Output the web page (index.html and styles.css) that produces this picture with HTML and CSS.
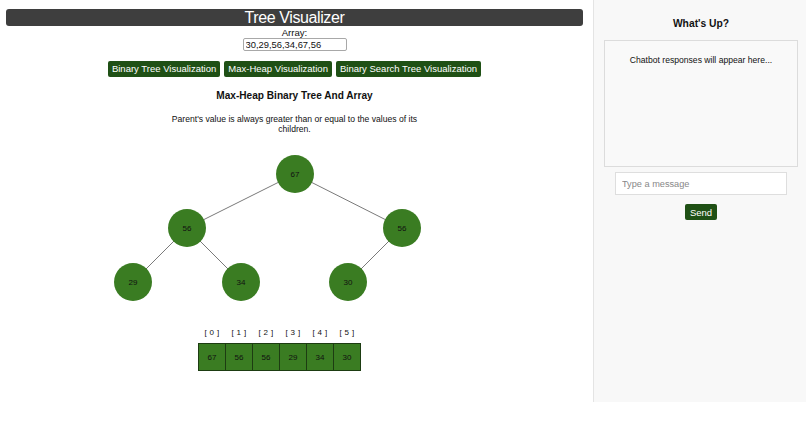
FILE: index.html
```html
<!DOCTYPE html>
<html lang="en">
<head>
  <meta charset="UTF-8" />
  <meta name="viewport" content="width=device-width, initial-scale=1.0"/>
  <title>Tree Visualizer</title>
  <link rel="stylesheet" href="styles.css">
</head>
<body>
  <div class="main">
    <h1 class="title">Tree Visualizer</h1>
    <label class="array-label" for="arrayInput">Array:</label>
    <input type="text" id="arrayInput" class="array-input" value="30,29,56,34,67,56" />

    <div class="buttons">
      <button class="btn">Binary Tree Visualization</button>
      <button class="btn">Max-Heap Visualization</button>
      <button class="btn">Binary Search Tree Visualization</button>
    </div>

    <h2 class="heading">Max-Heap Binary Tree And Array</h2>
    <p class="desc">Parent's value is always greater than or equal to the values of its children.</p>

    <svg class="tree" width="593" height="160" viewBox="0 0 593 160">
      <g class="edges">
        <line x1="295" y1="24" x2="187" y2="78" />
        <line x1="295" y1="24" x2="402" y2="78" />
        <line x1="187" y1="78" x2="133" y2="132" />
        <line x1="187" y1="78" x2="241" y2="132" />
        <line x1="402" y1="78" x2="348" y2="132" />
      </g>
      <g class="nodes">
        <circle cx="295" cy="24" r="19" /><text x="295" y="27">67</text>
        <circle cx="187" cy="78" r="19" /><text x="187" y="81">56</text>
        <circle cx="402" cy="78" r="19" /><text x="402" y="81">56</text>
        <circle cx="133" cy="132" r="19" /><text x="133" y="135">29</text>
        <circle cx="241" cy="132" r="19" /><text x="241" y="135">34</text>
        <circle cx="348" cy="132" r="19" /><text x="348" y="135">30</text>
      </g>
    </svg>

    <table class="heap-array">
      <tr class="indexes">
        <td>[ 0 ]</td><td>[ 1 ]</td><td>[ 2 ]</td><td>[ 3 ]</td><td>[ 4 ]</td><td>[ 5 ]</td>
      </tr>
      <tr class="values">
        <td>67</td><td>56</td><td>56</td><td>29</td><td>34</td><td>30</td>
      </tr>
    </table>
  </div>

  <div class="sidebar">
    <h3 class="chat-title">What's Up?</h3>
    <div class="chat-box">
      <p>Chatbot responses will appear here...</p>
    </div>
    <input type="text" class="chat-input" placeholder="Type a message" />
    <button class="send-btn">Send</button>
  </div>
</body>
</html>
```

FILE: styles.css
```css
body {
  margin: 0;
  font-family: "Liberation Sans", Arial, sans-serif;
  background: #ffffff;
  display: flex;
  align-items: flex-start;
  color: #111;
}
.main {
  width: 593px;
  box-sizing: border-box;
  padding: 0 10px 0 6px;
  text-align: center;
}
.title {
  margin: 9px 0 0;
  height: 17px;
  line-height: 18px;
  font-size: 16px;
  font-weight: normal;
  letter-spacing: -0.4px;
  color: #fff;
  background: #3e3e3e;
  border-radius: 3px;
}
.array-label {
  display: block;
  font-size: 9.6px;
  line-height: 11px;
  margin-top: 1px;
}
.array-input {
  display: block;
  margin: 0 auto;
  width: 104px;
  height: 13px;
  box-sizing: border-box;
  padding: 0 2px;
  border: 1px solid #a8a8a8;
  border-radius: 2px;
  font-family: inherit;
  font-size: 9.4px;
  color: #111;
  background: #fff;
}
.buttons {
  display: flex;
  justify-content: center;
  gap: 4px;
  margin-top: 10px;
}
.btn {
  height: 16px;
  padding: 0 4px;
  border: none;
  border-radius: 2px;
  background: #1f5015;
  color: #fff;
  font-family: inherit;
  font-size: 9.5px;
  line-height: 16px;
}
.heading {
  margin: 13px 0 0;
  font-size: 10.1px;
  line-height: 12px;
}
.desc {
  width: 262px;
  margin: 12px auto 0;
  font-size: 8.6px;
  line-height: 10px;
}
.tree {
  display: block;
  margin: 16px -10px 0 -6px;
}
.edges line {
  stroke: #7a7a7a;
  stroke-width: 1;
}
.nodes circle {
  fill: #3a7c22;
}
.nodes text {
  font-family: "Liberation Sans", Arial, sans-serif;
  font-size: 8px;
  fill: #111;
  text-anchor: middle;
}
.heap-array {
  border-collapse: collapse;
  table-layout: fixed;
  width: 163px;
  margin: 18px 0 0 192px;
}
.heap-array td {
  padding: 0;
  text-align: center;
  font-size: 8px;
}
.indexes td {
  height: 10px;
  line-height: 10px;
  padding-bottom: 5px;
  letter-spacing: 0.3px;
}
.values td {
  height: 26px;
  background: #3a7c22;
  border: 1px solid #1d3c12;
  color: #111;
}
.sidebar {
  flex: 1;
  height: 402px;
  box-sizing: border-box;
  padding: 0 8px 0 10px;
  background: #f8f8f8;
  border-left: 1px solid #e4e4e4;
  display: flex;
  flex-direction: column;
  align-items: center;
}
.chat-title {
  margin: 18px 0 0;
  font-size: 10.3px;
  line-height: 12px;
}
.chat-box {
  align-self: stretch;
  height: 127px;
  box-sizing: border-box;
  margin-top: 10px;
  border: 1px solid #dcdcdc;
  background: #f9f9f9;
  text-align: center;
}
.chat-box p {
  margin: 14px 0 0;
  font-size: 8.6px;
  line-height: 10px;
}
.chat-input {
  width: 172px;
  height: 23px;
  box-sizing: border-box;
  margin-top: 5px;
  padding: 0 6px;
  border: 1px solid #dedede;
  background: #fff;
  font-family: inherit;
  font-size: 9.2px;
}
.chat-input::placeholder {
  color: #888;
}
.send-btn {
  margin-top: 9px;
  width: 32px;
  height: 16px;
  padding: 0;
  border: none;
  border-radius: 2px;
  background: #1f5015;
  color: #fff;
  font-family: inherit;
  font-size: 9.5px;
}
```
